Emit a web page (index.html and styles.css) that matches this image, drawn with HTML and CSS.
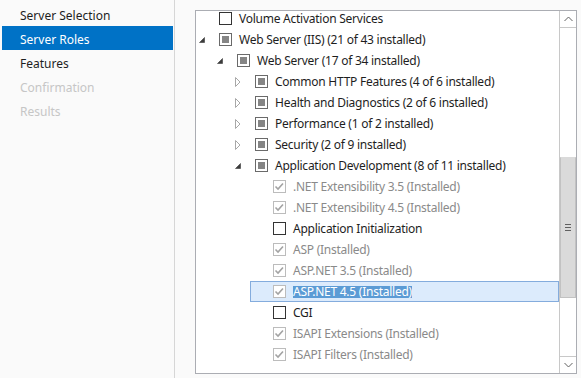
FILE: index.html
```html
<!DOCTYPE html>
<html lang="en">
  <head>
    <meta charset="UTF-8" />
    <title>Add Roles and Features Wizard</title>
    <link rel="stylesheet" href="styles.css">
  </head>
  <body>
    <div class="wizard">
      <div class="nav">
        <div class="nav-item">Server Selection</div>
        <div class="nav-item active">Server Roles</div>
        <div class="nav-item">Features</div>
        <div class="nav-item disabled">Confirmation</div>
        <div class="nav-item disabled">Results</div>
      </div>

      <div class="main">
        <div class="list">
          <div class="viewport">
            <div class="tree">
              <div class="row l0">
                <span class="exp"></span>
                <span class="cb"></span>
                <span class="label">Volume Activation Services</span>
              </div>
              <div class="row l0">
                <span class="exp"><svg width="6" height="6"><path d="M5.5 0.5 L5.5 5.5 L0.5 5.5 Z" fill="#3c3c3c" stroke="#3c3c3c" stroke-width="0.6"/></svg></span>
                <span class="cb part"></span>
                <span class="label">Web Server (IIS) (21 of 43 installed)</span>
              </div>
              <div class="row l1">
                <span class="exp"><svg width="6" height="6"><path d="M5.5 0.5 L5.5 5.5 L0.5 5.5 Z" fill="#3c3c3c" stroke="#3c3c3c" stroke-width="0.6"/></svg></span>
                <span class="cb part"></span>
                <span class="label">Web Server (17 of 34 installed)</span>
              </div>
              <div class="row l2">
                <span class="exp closed"><svg width="6" height="10"><path d="M0.5 0.5 L5 5 L0.5 9.5 Z" fill="none" stroke="#a8a8a8"/></svg></span>
                <span class="cb part"></span>
                <span class="label">Common HTTP Features (4 of 6 installed)</span>
              </div>
              <div class="row l2">
                <span class="exp closed"><svg width="6" height="10"><path d="M0.5 0.5 L5 5 L0.5 9.5 Z" fill="none" stroke="#a8a8a8"/></svg></span>
                <span class="cb part"></span>
                <span class="label">Health and Diagnostics (2 of 6 installed)</span>
              </div>
              <div class="row l2">
                <span class="exp closed"><svg width="6" height="10"><path d="M0.5 0.5 L5 5 L0.5 9.5 Z" fill="none" stroke="#a8a8a8"/></svg></span>
                <span class="cb part"></span>
                <span class="label">Performance (1 of 2 installed)</span>
              </div>
              <div class="row l2">
                <span class="exp closed"><svg width="6" height="10"><path d="M0.5 0.5 L5 5 L0.5 9.5 Z" fill="none" stroke="#a8a8a8"/></svg></span>
                <span class="cb part"></span>
                <span class="label">Security (2 of 9 installed)</span>
              </div>
              <div class="row l2">
                <span class="exp"><svg width="6" height="6"><path d="M5.5 0.5 L5.5 5.5 L0.5 5.5 Z" fill="#3c3c3c" stroke="#3c3c3c" stroke-width="0.6"/></svg></span>
                <span class="cb part"></span>
                <span class="label">Application Development (8 of 11 installed)</span>
              </div>
              <div class="row l3 installed">
                <span class="exp"></span>
                <span class="cb done"><svg width="11" height="11"><polyline points="1.5,5.5 4,8 9,2.5" fill="none" stroke="#a3a3a3" stroke-width="1.6"/></svg></span>
                <span class="label">.NET Extensibility 3.5 (Installed)</span>
              </div>
              <div class="row l3 installed">
                <span class="exp"></span>
                <span class="cb done"><svg width="11" height="11"><polyline points="1.5,5.5 4,8 9,2.5" fill="none" stroke="#a3a3a3" stroke-width="1.6"/></svg></span>
                <span class="label">.NET Extensibility 4.5 (Installed)</span>
              </div>
              <div class="row l3">
                <span class="exp"></span>
                <span class="cb"></span>
                <span class="label">Application Initialization</span>
              </div>
              <div class="row l3 installed">
                <span class="exp"></span>
                <span class="cb done"><svg width="11" height="11"><polyline points="1.5,5.5 4,8 9,2.5" fill="none" stroke="#a3a3a3" stroke-width="1.6"/></svg></span>
                <span class="label">ASP (Installed)</span>
              </div>
              <div class="row l3 installed">
                <span class="exp"></span>
                <span class="cb done"><svg width="11" height="11"><polyline points="1.5,5.5 4,8 9,2.5" fill="none" stroke="#a3a3a3" stroke-width="1.6"/></svg></span>
                <span class="label">ASP.NET 3.5 (Installed)</span>
              </div>
              <div class="row l3 installed selected">
                <span class="exp"></span>
                <span class="cb done"><svg width="11" height="11"><polyline points="1.5,5.5 4,8 9,2.5" fill="none" stroke="#a3a3a3" stroke-width="1.6"/></svg></span>
                <span class="label">ASP.NET 4.5 (Installed)</span>
              </div>
              <div class="row l3">
                <span class="exp"></span>
                <span class="cb"></span>
                <span class="label">CGI</span>
              </div>
              <div class="row l3 installed">
                <span class="exp"></span>
                <span class="cb done"><svg width="11" height="11"><polyline points="1.5,5.5 4,8 9,2.5" fill="none" stroke="#a3a3a3" stroke-width="1.6"/></svg></span>
                <span class="label">ISAPI Extensions (Installed)</span>
              </div>
              <div class="row l3 installed">
                <span class="exp"></span>
                <span class="cb done"><svg width="11" height="11"><polyline points="1.5,5.5 4,8 9,2.5" fill="none" stroke="#a3a3a3" stroke-width="1.6"/></svg></span>
                <span class="label">ISAPI Filters (Installed)</span>
              </div>
            </div>
          </div>
          <div class="scrollbar">
            <div class="sb-btn up"><svg width="9" height="6"><polyline points="0.5,5 4.5,1 8.5,5" fill="none" stroke="#606060"/></svg></div>
            <div class="track">
              <div class="thumb"><span class="grip"></span></div>
            </div>
            <div class="sb-btn down"><svg width="9" height="6"><polyline points="0.5,1 4.5,5 8.5,1" fill="none" stroke="#606060"/></svg></div>
          </div>
        </div>
      </div>
    </div>
  </body>
</html>
```

FILE: styles.css
```css
body {
  margin: 0;
  background: #fafafa;
  font-family: "Noto Sans", "Open Sans", sans-serif;
  font-size: 12px;
  color: #1e1e1e;
}
.wizard {
  display: flex;
  width: 581px;
  height: 378px;
  overflow: hidden;
}
.nav {
  width: 175px;
  box-sizing: border-box;
  border-right: 1px solid #d6d6d6;
  padding-top: 2px;
}
.nav-item {
  height: 24px;
  line-height: 27px;
  margin: 0 1px 0 2px;
  padding-left: 18px;
}
.nav-item.active {
  background: #0072c6;
  color: #fff;
}
.nav-item.disabled {
  color: #c6c6c6;
}
.main {
  flex: 1;
  padding: 10px 4px 0 20px;
}
.list {
  display: flex;
  height: 364px;
  box-sizing: border-box;
  border: 1px solid #abadb3;
  background: #fff;
}
.viewport {
  flex: 1;
  overflow: hidden;
}
.tree {
  margin-top: -3px;
}
.row {
  display: flex;
  align-items: center;
  height: 21px;
}
.l1 { margin-left: 18px; }
.l2 { margin-left: 36px; }
.l3 { margin-left: 54px; }
.exp {
  width: 23px;
  display: flex;
  align-items: center;
  padding-left: 3px;
  box-sizing: border-box;
}
.exp svg {
  display: block;
}
.cb {
  width: 13px;
  height: 13px;
  box-sizing: border-box;
  border: 1px solid #333;
  background: #fff;
  margin-right: 7px;
  display: flex;
  align-items: center;
  justify-content: center;
}
.cb.part {
  border-color: #6a6a6a;
  padding: 2px;
}
.cb.part::after {
  content: "";
  flex: 1;
  align-self: stretch;
  background: #858585;
}
.cb.done {
  border-color: #bcbcbc;
}
.label {
  white-space: nowrap;
  line-height: 12px;
  letter-spacing: -0.25px;
}
.installed .label {
  color: #8a8a8a;
}
.selected {
  background: #dcebfc;
  box-shadow: inset 0 0 0 1px #84acdd;
}
.selected .label {
  background: #5b9bd5;
  color: #fff;
}
.scrollbar {
  width: 17px;
  box-sizing: border-box;
  border-left: 1px solid #c8c8c8;
  display: flex;
  flex-direction: column;
}
.sb-btn {
  height: 17px;
  box-sizing: border-box;
  display: flex;
  align-items: center;
  justify-content: center;
}
.sb-btn.up {
  border-bottom: 1px solid #c8c8c8;
}
.sb-btn.down {
  border-top: 1px solid #c8c8c8;
}
.track {
  flex: 1;
}
.thumb {
  margin-top: 129px;
  height: 141px;
  box-sizing: border-box;
  background: #dadada;
  border: 1px solid #c2c2c2;
  border-top-color: #dadada;
  display: flex;
  align-items: center;
  justify-content: center;
}
.grip {
  width: 6px;
  height: 5px;
  border-top: 1px solid #606060;
  border-bottom: 1px solid #606060;
  background: linear-gradient(#606060, #606060) center / 100% 1px no-repeat;
}
```
